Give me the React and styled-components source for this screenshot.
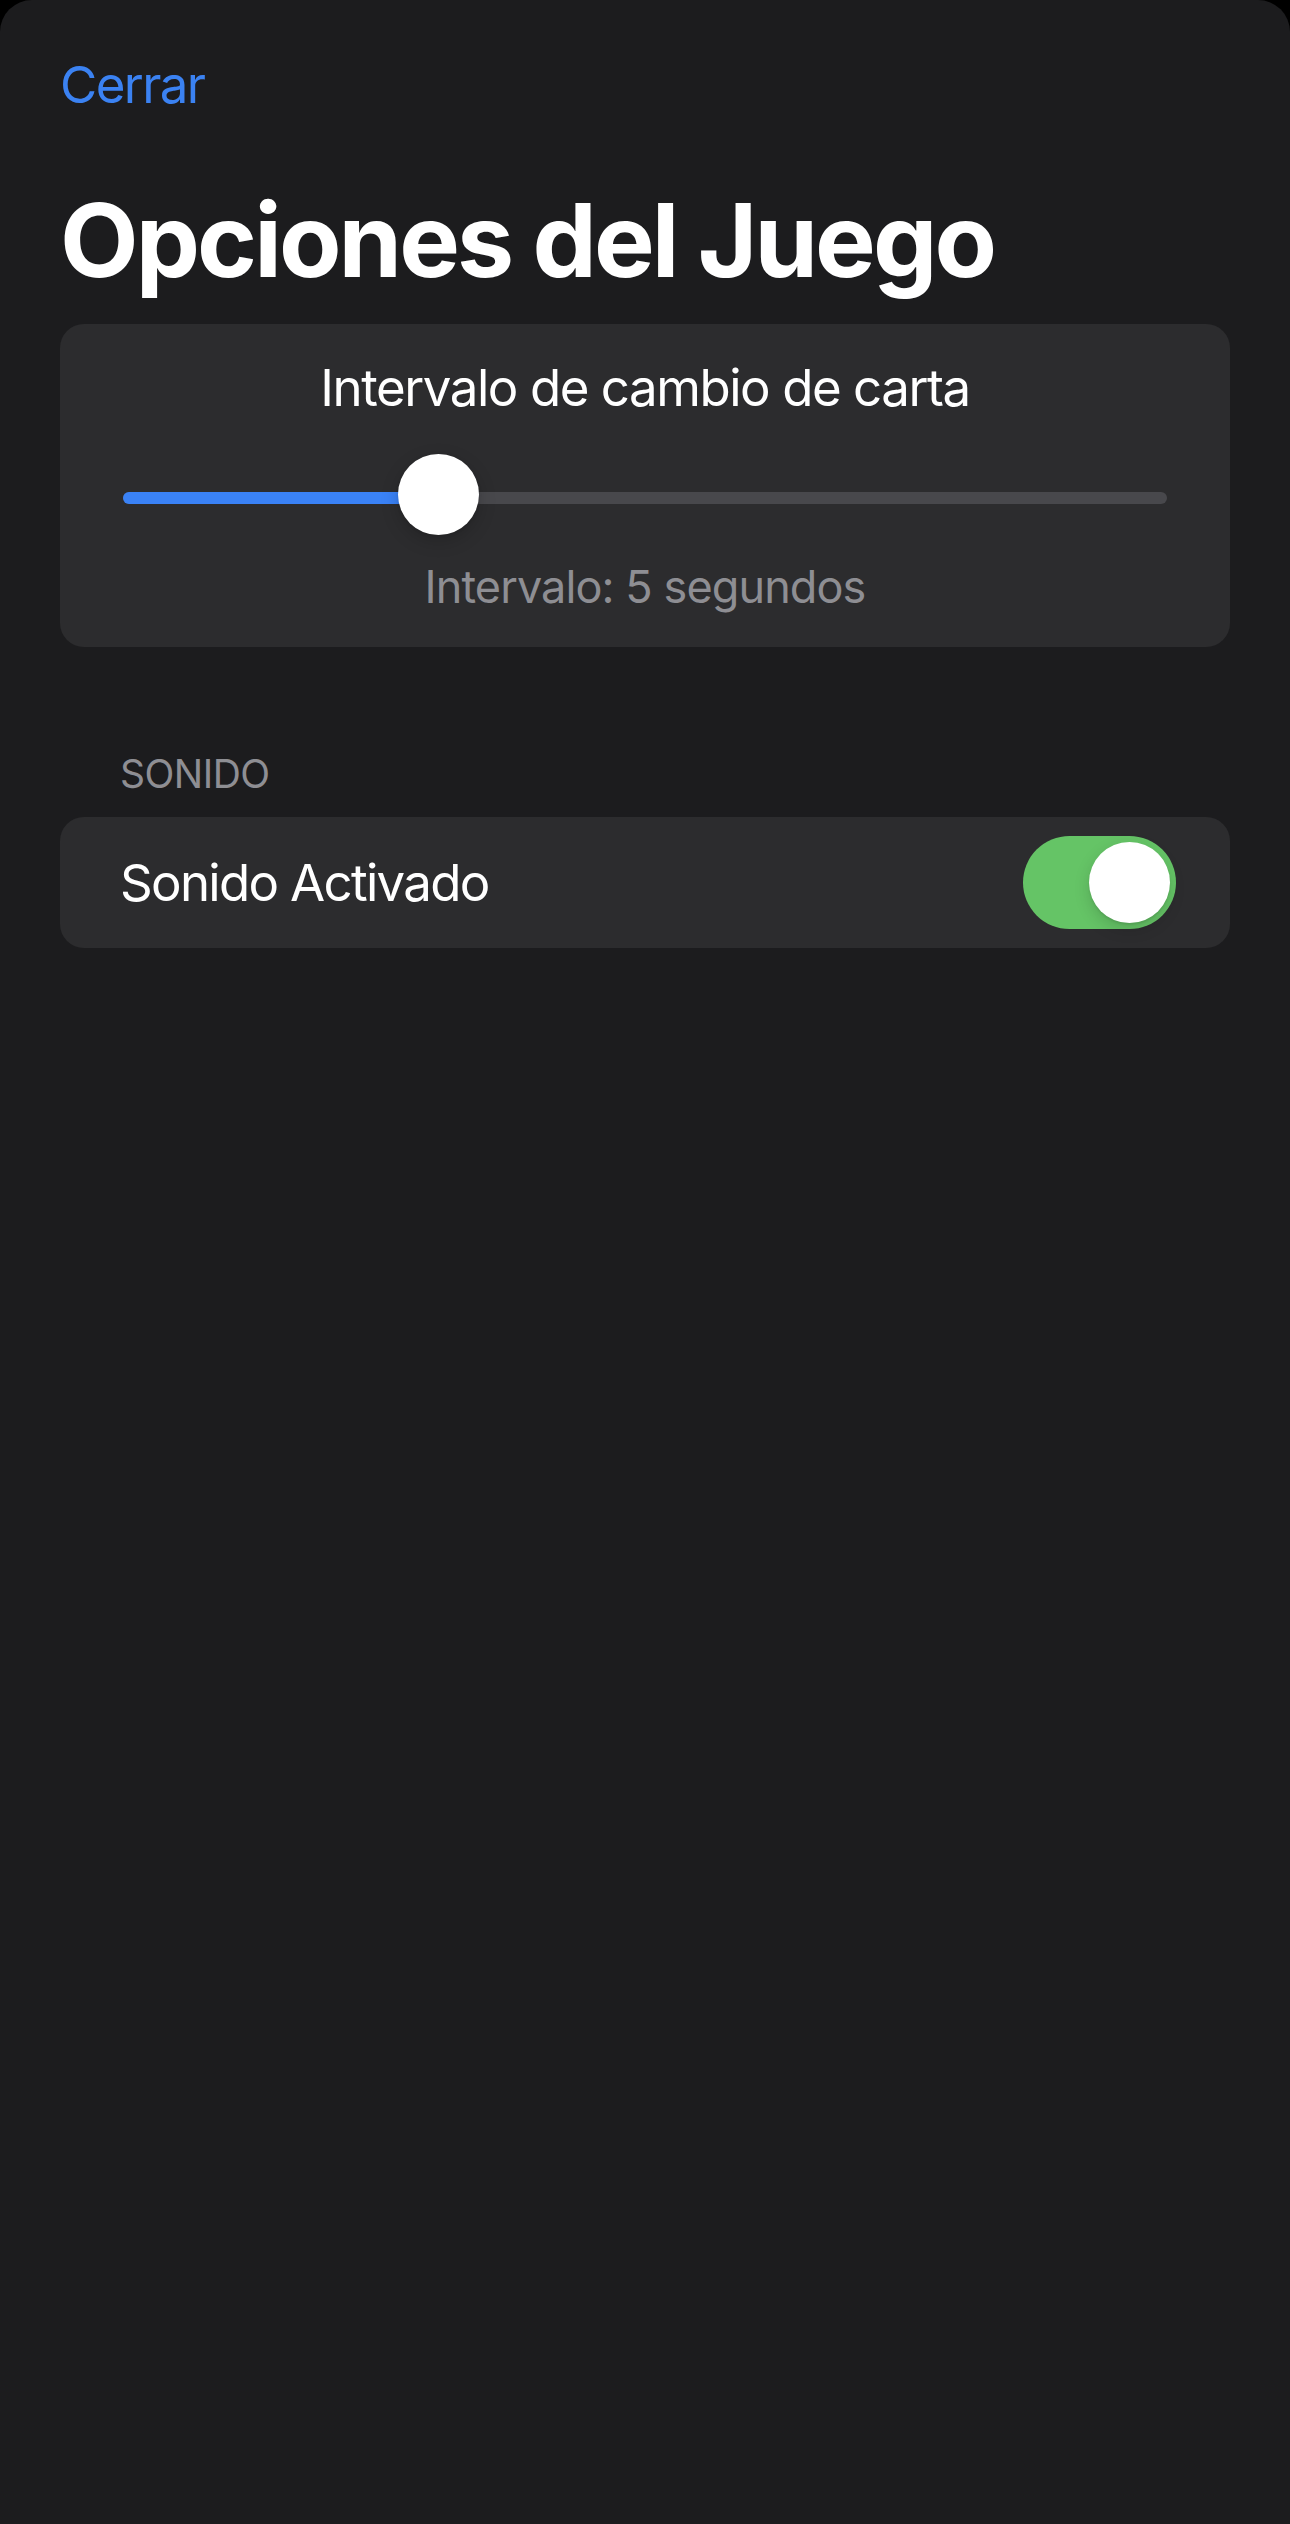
import React, { useState } from "react";
import styled, { createGlobalStyle } from "styled-components";

const GlobalStyle = createGlobalStyle`
  html, body {
    margin: 0;
    padding: 0;
    background: #000000;
  }
  body {
    font-family: Inter, "Noto Sans", "Liberation Sans", sans-serif;
    -webkit-font-smoothing: antialiased;
  }
`;

const MIN = 1;
const MAX = 15;

export default function App() {
  const [interval, setInterval] = useState(5);
  const [sound, setSound] = useState(true);
  const fraction = (interval - MIN) / (MAX - MIN);

  return (
    <>
      <GlobalStyle />
      <Sheet>
        <CloseButton type="button">Cerrar</CloseButton>
        <Title>Opciones del Juego</Title>

        {/* Intervalo */}
        <Card>
          <CardTitle>Intervalo de cambio de carta</CardTitle>
          <Slider
            onClick={(e) => {
              const r = e.currentTarget.getBoundingClientRect();
              const f = Math.min(1, Math.max(0, (e.clientX - r.left - 40) / (r.width - 81)));
              setInterval(Math.round(MIN + f * (MAX - MIN)));
            }}
          >
            <Track>
              <Range style={{ width: `calc(${fraction} * (100% - 81px) + 40px)` }} />
            </Track>
            <Thumb style={{ left: `calc(${fraction} * (100% - 81px))` }} />
          </Slider>
          <Caption>Intervalo: {interval} segundos</Caption>
        </Card>

        {/* Sonido */}
        <SectionHeader>SONIDO</SectionHeader>
        <Card $row>
          <RowLabel>Sonido Activado</RowLabel>
          <Switch type="button" $on={sound} onClick={() => setSound(!sound)}>
            <Knob $on={sound} />
          </Switch>
        </Card>
      </Sheet>
    </>
  );
}

const Sheet = styled.div`
  min-height: 2524px;
  box-sizing: border-box;
  background: #1c1c1e;
  border-radius: 32px 32px 0 0;
  padding: 54px 60px 0;
  display: flex;
  flex-direction: column;
`;

const CloseButton = styled.button`
  align-self: flex-start;
  background: none;
  border: 0;
  padding: 0;
  font-family: inherit;
  font-size: 51px;
  line-height: 61px;
  color: #3b82f2;
  letter-spacing: -1.6px;
  cursor: pointer;
`;

const Title = styled.h1`
  margin: 64px 0 23px;
  font-size: 102px;
  line-height: 122px;
  font-weight: 700;
  color: #ffffff;
  letter-spacing: -2.9px;
`;

const Card = styled.div`
  background: #2c2c2e;
  border-radius: 24px;
  box-sizing: border-box;
  ${(p) =>
    p.$row
      ? `
    height: 131px;
    padding: 0 54px 0 60px;
    display: flex;
    align-items: center;
    justify-content: space-between;
  `
      : `
    padding: 33px 63px 33px;
    display: flex;
    flex-direction: column;
    align-items: center;
  `}
`;

const CardTitle = styled.div`
  font-size: 51px;
  line-height: 61px;
  color: #ffffff;
  letter-spacing: -1.45px;
`;

const Slider = styled.div`
  position: relative;
  align-self: stretch;
  height: 81px;
  margin-top: 36px;
  display: flex;
  align-items: center;
  cursor: pointer;
`;

const Track = styled.div`
  flex: 1;
  height: 12px;
  margin-top: 6px;
  border-radius: 6px;
  background: #48484c;
  overflow: hidden;
`;

const Range = styled.div`
  height: 100%;
  background: #3a82f6;
`;

const Thumb = styled.div`
  position: absolute;
  top: 0;
  width: 81px;
  height: 81px;
  border-radius: 50%;
  background: #ffffff;
  box-shadow: 0 6px 18px rgba(0, 0, 0, 0.18), 0 1px 3px rgba(0, 0, 0, 0.12);
`;

const Caption = styled.div`
  margin-top: 25px;
  font-size: 45px;
  line-height: 54px;
  color: #8e8e93;
  letter-spacing: -0.9px;
`;

const SectionHeader = styled.div`
  margin: 103px 0 20px 60px;
  font-size: 39px;
  line-height: 47px;
  color: #8e8e93;
  letter-spacing: -0.5px;
`;

const RowLabel = styled.div`
  font-size: 51px;
  line-height: 61px;
  color: #ffffff;
  letter-spacing: -1.7px;
`;

const Switch = styled.button`
  position: relative;
  width: 153px;
  height: 93px;
  padding: 0;
  border: 0;
  border-radius: 47px;
  background: ${(p) => (p.$on ? "#65c466" : "#39393d")};
  cursor: pointer;
  transition: background 0.2s;
`;

const Knob = styled.span`
  position: absolute;
  top: 6px;
  left: ${(p) => (p.$on ? "66px" : "6px")};
  width: 81px;
  height: 81px;
  border-radius: 50%;
  background: #ffffff;
  box-shadow: 0 6px 16px rgba(0, 0, 0, 0.15), 0 2px 2px rgba(0, 0, 0, 0.08);
  transition: left 0.2s;
`;
